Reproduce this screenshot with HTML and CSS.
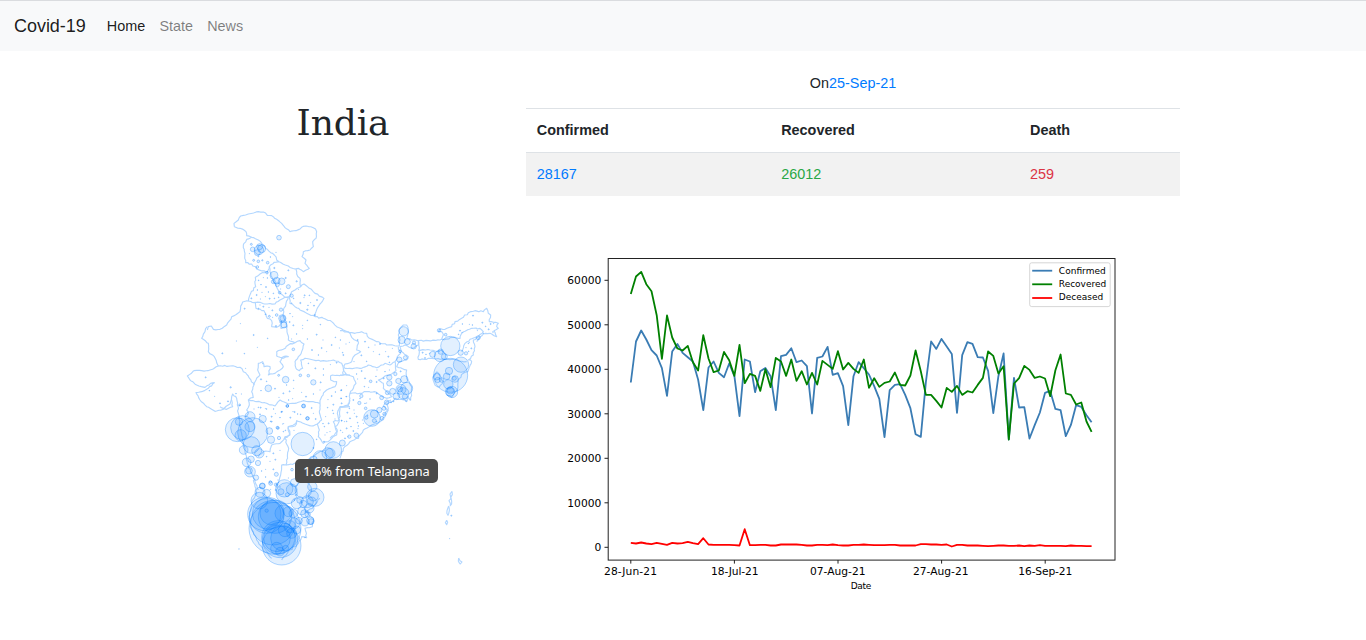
FILE: index.html
```
<!DOCTYPE html>
<html lang="en">
<head>
<meta charset="utf-8">
<title>Covid-19</title>
<link rel="stylesheet" href="styles.css">
</head>
<body>
<nav class="navbar">
  <a class="brand">Covid-19</a>
  <a class="nav-link active">Home</a>
  <a class="nav-link">State</a>
  <a class="nav-link">News</a>
</nav>
<main class="content">
  <section class="map-column">
    <h1 class="title">India</h1>
    <div class="map-wrap">
      <svg class="map" viewBox="180 200 330 370"><g id="borders"></g><g id="bubbles"></g></svg>
      <div class="tip">1.6% from Telangana</div>
    </div>
  </section>
  <section class="data-column">
    <p class="date">On<span class="blue">25-Sep-21</span></p>
    <table class="stats">
      <thead><tr><th class="c1">Confirmed</th><th class="c2">Recovered</th><th>Death</th></tr></thead>
      <tbody><tr><td class="blue">28167</td><td class="green">26012</td><td class="red">259</td></tr></tbody>
    </table>
    <svg class="chart" viewBox="526 196 654 404">
      <g id="lines"></g>
      <rect class="frame" x="608.2" y="258.5" width="506.8" height="301.6"/>
      <g id="axes"></g>
      <text class="small" x="850.7" y="588.5" textLength="20.5">Date</text>
      <rect class="legend" x="1029.7" y="262.8" width="80.5" height="43.8" rx="2"/>
      <path class="confirmed" d="M1032.2 270.7h20"/>
      <path class="recovered" d="M1032.2 284.3h20"/>
      <path class="deceased" d="M1032.2 298h20"/>
      <text class="small" x="1058.8" y="273.6" textLength="47">Confirmed</text>
      <text class="small" x="1058.8" y="287" textLength="47.4">Recovered</text>
      <text class="small" x="1058.8" y="300.4" textLength="44.4">Deceased</text>
    </svg>
  </section>
</main>
<script src="script.js"></script>
</body>
</html>
```
FILE: styles.css
```
* { box-sizing: border-box; }
body {
  margin: 0;
  height: 640px;
  overflow: hidden;
  background: #fff;
  color: #212529;
  font: 14.4px/21.6px "Liberation Sans", Arial, sans-serif;
}
.navbar {
  display: flex;
  align-items: center;
  height: 51px;
  padding: 2px 14px 0;
  border-top: 1px solid #dadcdf;
  background: #f8f9fa;
}
.brand { margin-right: 14px; font-size: 18px; letter-spacing: -.04px; color: rgba(0, 0, 0, .9); }
.nav-link { padding: 0 7.1px; color: rgba(0, 0, 0, .5); }
.nav-link.active { color: rgba(0, 0, 0, .9); }
.content { display: grid; grid-template-columns: 366px 654px; padding-left: 160px; }
.title {
  margin: 50px 0 0;
  height: 43px;
  text-align: center;
  font: 36px/43px "DejaVu Serif", serif;
  letter-spacing: -.1px;
}
.map-wrap { position: relative; margin: 56px 0 0 20px; width: 330px; height: 370px; }
.map { display: block; width: 330px; height: 370px; }
.tip {
  position: absolute;
  left: 115px;
  top: 259px;
  width: 143px;
  height: 24px;
  border-radius: 5px;
  background: #4a4a4a;
  color: #fff;
  text-align: center;
  white-space: nowrap;
  font: 12.8px/24px "Noto Sans", sans-serif;
}
.date { margin: 0; padding: 22px 0 13.4px; height: 57px; text-align: center; }
.stats { width: 654px; border-collapse: separate; border-spacing: 0; table-layout: fixed; }
.stats th, .stats td { padding: 10.8px; height: 44px; border-top: 1px solid #dee2e6; text-align: left; line-height: 21px; }
.stats tbody td { background: #f2f2f2; }
.c1 { width: 244.4px; }
.c2 { width: 248.8px; }
.blue { color: #007bff; }
.stats td.green { color: #28a745; }
.stats td.red { color: #dc3545; }
.chart { display: block; width: 654px; height: 404px; }
.chart path { fill: none; stroke-width: 1.8; stroke-linejoin: round; }
.chart text { font: 10.7px "DejaVu Sans", sans-serif; fill: #000; }
.chart text.small { font-size: 9px; }
.confirmed { stroke: #3a7cb4; }
.recovered { stroke: #008000; }
.deceased { stroke: #f00; }
.frame { fill: none; stroke: #222; stroke-width: 1; }
.chart .tick { stroke: #222; stroke-width: 1; }
.legend { fill: #fff; stroke: #ccc; stroke-width: .8; }
#borders path { fill: none; stroke: #b3d7ff; stroke-width: 3.4; stroke-linejoin: round; }
#bubbles circle { fill: #007bff; fill-opacity: .115; stroke: #007bff; stroke-opacity: .36; stroke-width: 2.6; }
```
FILE: script.js
```
const NS = "http://www.w3.org/2000/svg";
function add(parent, tag, attrs, text) {
  const el = document.createElementNS(NS, tag);
  for (const k in attrs) el.setAttribute(k, attrs[k]);
  if (text) el.textContent = text;
  parent.appendChild(el);
  return el;
}
const nums = s => s.trim().split(/[\s,]+/).map(Number);

// Map sheets: origin on the page, state borders, bubbles (x y r) and minor districts (x y)
const sheets = [
{ at: [180, 200],
  borders: [
  "163,80 162,70 175,60 182,48 205,42 235,35 250,36 262,46 275,47 290,58 305,70 315,83 330,95 348,92 365,82 378,78 400,83 410,95 408,115 398,125 400,140 390,150 370,155 366,170 378,180 375,190 388,205 370,215 355,205 345,207 325,198 310,193 297,185 290,180 283,165 272,158 262,148 250,135 235,120 215,112 200,107 198,95 180,85 163,80",
  "215,112 200,118 190,135 195,160 197,188 215,192 230,207 258,215 262,218 268,200 282,187 297,185",
  "268,200 270,215 278,240 290,262 300,280 315,292 328,290 335,275 345,270 362,260 360,235 350,222 348,207",
  "258,215 240,222 226,232 227,260 212,280 205,303 222,308 240,307 262,312 285,312 300,300 315,292",
  "205,303 188,306 180,335 155,350 140,375 120,388 100,388 94,378 85,380 82,390",
  "226,308 228,325 252,332 262,355 275,362 275,380 290,382 300,375 306,362",
  "315,292 325,292 310,330 310,350 318,365 320,385",
  "362,260 372,252 388,265 405,280 432,295 420,312 408,335 405,350",
  "328,290 330,310 345,320 360,330 380,340 405,350 430,355 455,365 470,380 490,390"],
  bubbles: "297 113 7 237 150 14 239 140 9 218 148 7 232 158 9 245 146 12 214 133 3 235 184 4 263 188 4 232 201 4 221 181 3 247 181 2 261 218 4 282 226 12 290 242 10 305 244 10 280 245 6 292 254 6 325 260 6 335 287 5 299 278 4 283 204 2 317 234 2 350 244 2 307 355 11 308 355 8 303 329 5 290 345 4 268 349 3 312 375 9 302 366 3 361 309 2 382 329 2",
  dots: "208 161 235 169 271 171 288 157 325 211 236 241 250 233 258 261 232 270 246 277 230 285 265 276 256 290 269 296 283 295 241 297 214 295 296 292 302 267 317 280 280 280 355 268 374 286 388 286 372 293 411 300 384 316 392 308 402 317 341 295 240 315 250 320 235 325 267 322 277 331 256 343 278 352 288 378 330 341 338 350 329 366 382 361 368 376 404 345 421 374 181 371 194 326 243 254 335 309 340 376 262 234" },
{ at: [180, 320],
  borders: [
  "82,20 75,35 65,55 85,70 85,95 103,110 115,138 150,138 180,142 190,155 205,168 222,195",
  "115,138 90,150 65,152 42,152 22,168 30,180 50,195 75,202 92,190 103,188 85,205 65,215 48,218 60,240 80,260 105,274 130,268 150,252 155,230 158,222 170,235 172,255 175,280 178,300",
  "222,195 215,215 220,232 205,240 208,255 200,270 205,280 195,290",
  "205,240 230,245 260,250 285,258 300,240 325,252 345,250 370,242 400,245 420,250",
  "222,195 228,180 240,165 233,150 235,130 248,125 252,140 270,140 265,165 285,160 300,150 310,140 300,125 305,115 325,110 318,108 300,112 290,108 290,95 310,88 325,75 345,68 360,62 372,72 365,95 355,110 345,125 348,145 358,152 368,145 362,120 375,115 400,120 430,122 460,120 485,130 490,145 490,165",
  "345,68 325,60 322,40 318,20 303,25 303,8 320,5 322,22",
  "510,165 485,165 452,167 452,180 470,185 465,200 440,210 425,230 420,250 418,275 425,300 412,312 395,318 375,312 350,302 345,312 325,320 330,345 318,350 312,358",
  "510,260 480,262 480,290 475,310 465,320 470,345 445,365 430,370 415,350 418,330 412,312",
  "490,30 510,40"],
  bubbles: "265 205 10 317 179 10 400 187 8 385 167 4 361 166 4 340 88 4 296 166 3 371 258 6 322 258 4 382 295 5 292 323 4 179 255 3 152 202 2 243 178 2",
  dots: "169 63 221 45 263 55 232 82 127 100 193 101 197 145 77 172 88 212 104 229 120 250 168 221 184 222 144 244 243 212 248 131 285 206 260 184 297 232 310 220 320 195 341 205 329 214 341 181 365 217 378 230 400 222 420 210 422 187 430 165 451 134 406 145 385 130 429 60 425 84 382 57 368 26 410 44 350 42 335 57 396 90 415 105 440 95 455 75 466 52 478 84 490 105 481 60 498 72 483 211 466 216 484 235 460 254 443 263 444 239 455 228 458 271 437 290 446 310 433 320 450 335 485 250 500 230 493 305 500 325 482 331 504 350 304 276 281 267 256 266 240 283 272 304 308 312 344 276 362 283 400 280 407 297 326 240 338 236 275 290 235 262 222 267 395 264 310 335 435 345 470 128 430 147" },
{ at: [340, 300],
  borders: [
  "0,92 30,98 45,100 65,95 80,100 88,115 110,125 140,135 178,138",
  "30,98 35,112 55,125 50,150 62,155 45,165 35,185 15,192 10,210 20,225 0,225",
  "15,205 60,205 85,195 110,203 135,190 150,195 165,185 172,170 182,160 175,140",
  "20,225 40,230 48,250 40,265 30,280 60,280 80,275 105,275 120,285 140,295 155,290 130,265 130,250 115,240 135,228 155,222 168,212 165,185",
  "178,138 180,120 175,105 180,85 190,75 200,75 205,90 200,115 215,120 235,122 235,135 215,145 195,135 180,140 185,155 205,170 200,180 178,185 170,200 200,210 200,235 215,260 212,300 205,290 200,305 185,298 165,295 155,305 140,312 145,325 130,345",
  "30,280 28,310 10,320 0,320",
  "235,122 237,150 235,178 260,178 275,175 300,178 315,178 350,180 380,185",
  "235,150 270,150 300,155","235,122 265,122 300,120 305,118 345,112 360,115 365,100 395,85 420,85 430,95 415,110 400,120 405,140 400,165 385,180 395,184 383,215 370,220 355,240 352,270 335,292 320,285",
  "365,155 375,130 390,118 410,110",
  "305,118 310,105 305,95 295,95 300,86 315,88 335,80 345,65 365,55 385,38 405,32 430,35 440,25 445,40 452,45 448,65 475,70 470,80 475,85 462,92 470,110 450,100 430,102 410,125",
  "290,215 278,232 285,255 298,262 310,245 300,225 290,215"],
  bubbles: "191 94 14 185 120 11 202 125 9 222 128 5 221 139 8 180 154 4 196 173 6 178 179 8 148 232 8 148 250 8 175 243 8 193 238 11 200 265 18 183 268 15 158 274 9 190 280 17 169 289 10 195 290 8 180 268 8 142 278 6 166 222 5 92 244 4 125 293 6 140 307 7 64 288 5 58 309 5 77 325 4 331 138 29 332 226 51 363 194 23 278 163 9 300 168 17 302 155 8 313 170 9 362 158 8 378 160 5 297 91 5 317 104 4 327 213 11 320 229 10 345 237 10 325 253 14 290 230 10 293 240 8 330 275 14 336 276 17 331 272 10 343 235 6 305 240 7 415 113 6",
  dots: "28 127 53 120 8 158 42 185 75 125 86 142 100 155 64 166 80 184 105 135 120 132 118 163 137 155 145 170 148 187 157 145 65 213 50 222 53 237 75 235 73 260 86 262 110 246 108 229 111 210 131 235 135 215 148 210 182 214 5 270 18 290 3 295 28 325 42 330 40 300 60 296 80 309 30 355 55 378 5 362 82 346 110 365 20 257 248 158 258 163 268 160 255 174 356 103 366 97 360 92 367 72 388 73 399 47 397 75 412 92 427 68 437 79 430 100 446 88 459 96 461 71 452 72 385 130 378 143 394 145 386 154 388 127 110 280 90 297 67 360 50 350" },
{ at: [220, 400],
  borders: [
  "193,112 208,105 205,80 225,78 230,62",
  "203,112 195,112 180,130 155,135 150,155 130,155 115,170",
  "55,50 65,100 75,150 82,190 95,220 105,245 115,270",
  "195,115 206,145 198,195 185,195 182,225 170,265",
  "198,195 230,190 265,178 295,158 315,150",
  "0,20 20,28 38,20 35,0"],
  bubbles: "52 89 36 68 83 36 98 98 45 90 80 15 57 65 11 90 50 15 128 57 11 62 106 17 94 135 25 71 150 13 110 152 15 148 93 10 153 119 11 118 160 14 177 114 5 80 187 13 93 178 10 114 189 8 90 215 16 87 212 10 108 233 8 127 258 8 248 132 35 340 150 25 323 160 17 300 172 20 280 180 12 202 18 4 250 18 5 263 55 5 174 84 4 169 223 6 151 246 4 216 209 4",
  dots: "58 16 122 23 140 27 166 41 186 35 180 53 219 35 211 53 233 42 191 71 155 65 196 91 180 151 160 160 140 170 150 184 166 179 125 213 137 208 160 208 137 231 174 240 170 253 309 71 321 98 312 125 290 118 222 91 280 144 180 261 205 234" },
{ at: [225, 480],
  borders: ["85,0 95,40 80,70 72,110 78,145 95,180 115,210 140,235", "285,55 262,85 240,95 265,115 262,140 240,145 245,173 230,170 220,190 190,215 170,240"],
  bubbles: "150 145 78 118 102 50 125 108 52 130 100 48 144 128 67 170 197 58 165 180 53 160 172 50 156 175 40 175 175 38 150 110 50 140 100 35 103 62 25 112 18 9 137 10 6 105 37 15 125 40 12 185 40 32 178 25 26 200 28 16 168 35 9 208 8 12 235 30 25 262 20 14 270 52 27 265 48 15 215 70 16 235 72 11 247 65 18 260 65 14 239 101 12 248 103 8 256 122 11 258 125 9 240 125 13 222 122 10 208 130 16 195 140 18 180 150 20 205 100 13 190 95 15 175 100 25 215 150 12 200 160 15 182 205 9 155 205 18 165 215 13 42 207 1 153 14 5 187 44 6 225 60 10 230 93 12 253 85 14 125 92 5",
  dots: "137 28 152 30 240 173 160 8 212 45 208 60" },
{ at: [330, 400],
  borders: ["183,0 170,5 160,18 175,30 165,50 150,65 125,75 100,90 85,115 60,125 40,145 30,175",
  "60,0 55,18 30,20 22,40 28,60 10,65 22,95 0,115",
  "366,274 360,282 362,292 367,284 366,274","363,293 357,302 361,317 365,303 363,293","356,318 351,332 354,346 358,332 356,318","350,361 346,368 350,374 353,367 350,361","386,474 385,483 391,492 396,486 390,482 386,474"],
  bubbles: "126 54 25 133 42 12 148 30 8 162 25 6 133 62 6 109 53 5 163 42 5 156 55 6 79 106 7 58 110 5 37 129 9 0 160 15",
  dots: "359 416 364 347 10 40 15 57 35 62 50 64 38 97 52 38 63 80 84 86 70 93 83 68 100 70 45 115 105 10 73 40 190 4 228 3 240 0 183 7" }
];

// Small repeatable offsets roughen the borders between survey points
let seed = 7;
const wobble = n => { seed = (seed * 16807) % 2147483647; return (seed / 2147483647 - .5) * n; };
function rough(s) {
  const p = s.split(" ").map(q => q.split(",").map(Number));
  let d = "M" + p[0];
  for (let i = 1; i < p.length; i++) {
    const [x0, y0] = p[i - 1], [x1, y1] = p[i];
    const n = Math.max(1, Math.round(Math.hypot(x1 - x0, y1 - y0) / 7));
    for (let k = 1; k < n; k++) {
      d += `L${(x0 + (x1 - x0) * k / n + wobble(4)).toFixed(1)} ${(y0 + (y1 - y0) * k / n + wobble(4)).toFixed(1)}`;
    }
    d += "L" + x1 + " " + y1;
  }
  return d;
}
for (const s of sheets) {
  const t = { transform: `translate(${s.at}) scale(.33333)` };
  const b = add(document.getElementById("borders"), "g", t);
  s.borders.forEach(x => add(b, "path", { d: rough(x) }));
  const g = add(document.getElementById("bubbles"), "g", t);
  const c = nums(s.bubbles), m = nums(s.dots);
  for (let i = 0; i < c.length; i += 3) add(g, "circle", { cx: c[i], cy: c[i + 1], r: c[i + 2] });
  for (let i = 0; i < m.length; i += 2) add(g, "circle", { cx: m[i], cy: m[i + 1], r: .7 + (i % 3) * .5 });
}

// Daily series, in thirds of a pixel below y = 250
const series = {
confirmed: "397 274 241 268 300 316 354 437 304 281 308 321 334 388 480 352 334 368 381 340 378 498 328 334 426 363 353 378 480 318 314 294 336 331 348 490 323 319 290 374 369 408 525 378 336 354 373 408 446 561 420 404 402 434 474 552 560 395 274 296 266 289 311 488 315 276 281 321 322 362 489 378 310 568 383 472 471 565 525 487 428 422 476 480 558 524 465 470 495 516",
recovered: "131 79 65 102 123 195 326 196 262 295 301 287 336 361 255 325 366 361 305 330 377 284 399 371 377 422 357 411 323 334 377 328 392 363 403 368 403 332 344 356 303 358 338 356 368 328 413 384 410 398 394 367 404 406 376 301 363 434 434 452 472 413 425 407 434 423 427 404 383 304 317 370 348 568 400 384 347 359 383 379 385 438 360 313 430 434 463 457 514 545",
deceased: "878 880 877 880 882 878 881 884 878 880 879 875 879 882 864 883 884 884 884 884 885 886 837 885 885 884 884 886 886 883 883 883 883 884 886 886 884 884 885 883 885 886 886 884 884 883 884 885 885 885 884 884 886 886 886 886 882 882 883 883 884 883 889 884 884 886 886 886 887 888 887 886 886 887 887 886 888 886 887 885 887 887 887 887 888 886 887 887 888 888"
};
const lines = document.getElementById("lines"), axes = document.getElementById("axes");
for (const k in series) {
  const d = nums(series[k]).map((y, i) => `${i ? "L" : "M"}${(630.8 + i * 5.178).toFixed(1)} ${(250.2 + y / 3).toFixed(1)}`).join("");
  add(lines, "path", { class: k, d });
}
for (let i = 0; i < 7; i++) {
  const y = 547.3 - i * 44.5, w = i ? 34 : 6.8;
  add(axes, "path", { class: "tick", d: `M604.5 ${y}h3.7` });
  add(axes, "text", { x: 601.3 - w, y: y + 4, textLength: w }, String(i * 10000));
}
[["28-Jun-21", 604, 53], ["18-Jul-21", 711, 47.5], ["07-Aug-21", 810, 55.5], ["27-Aug-21", 913, 55.5], ["16-Sep-21", 1018.3, 54]].forEach(([s, x, w], i) => {
  add(axes, "path", { class: "tick", d: `M${630.8 + i * 103.6} 560v3.6` });
  add(axes, "text", { x, y: 575.4, textLength: w }, s);
});
```
